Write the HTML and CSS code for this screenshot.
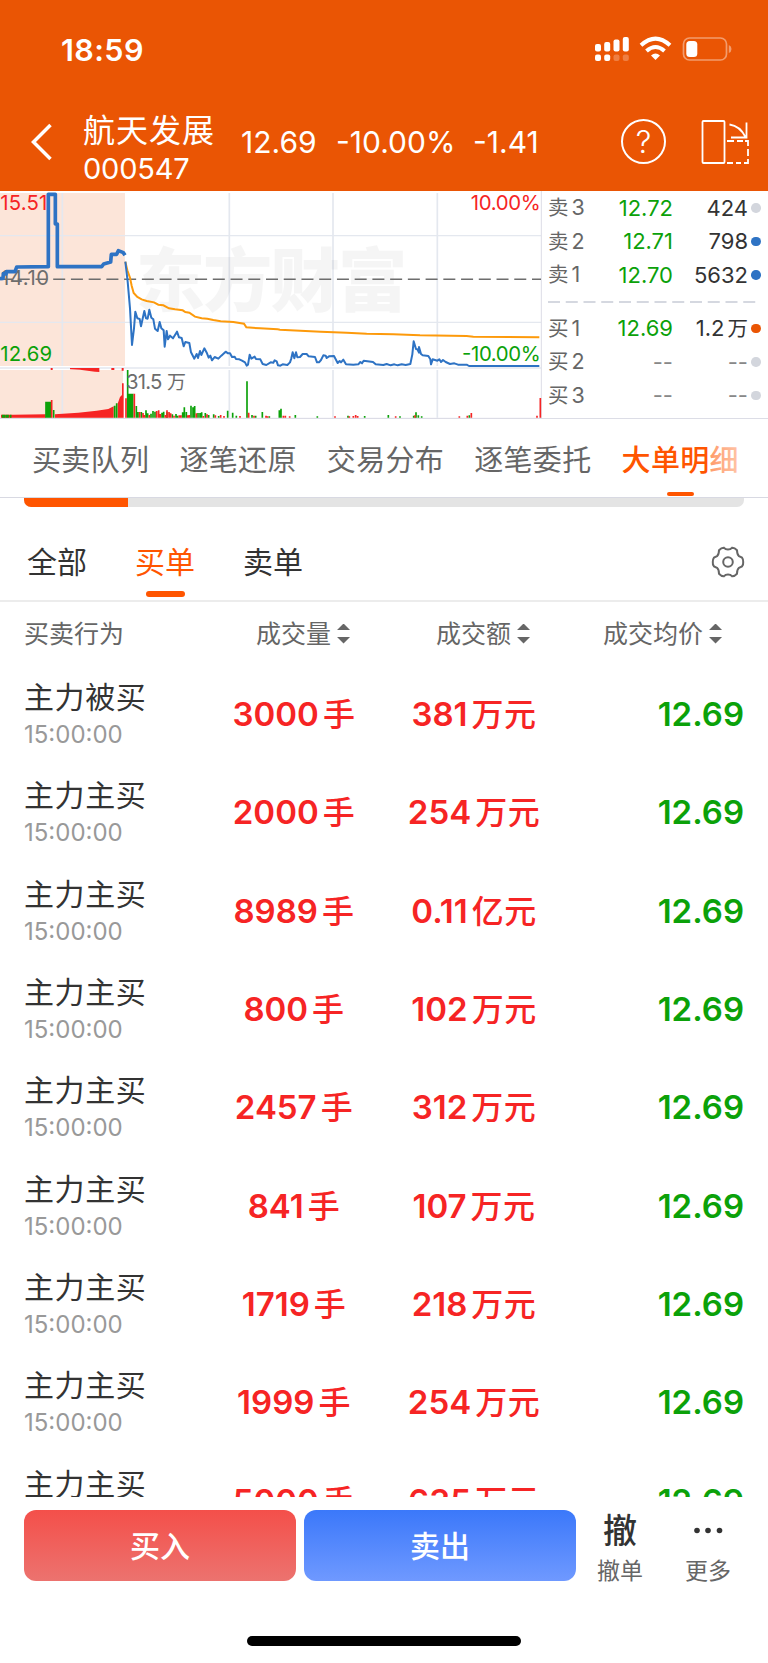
FILE: index.html
```html
<!DOCTYPE html>
<html lang="zh-CN">
<head>
    <meta charset="UTF-8">
    <meta name="viewport" content="width=device-width, initial-scale=1.0">
    <title>航天发展 000547</title>
    <link rel="stylesheet" href="styles.css">
</head>
<body>
<header class="top">
    <div class="status-bar">
        <span class="clock">18:59</span>
        <svg class="status-icons" width="138" height="26" viewBox="0 0 138 26">
            <g fill="#fff">
                <rect x="0" y="8" width="6" height="7.5" rx="2"/>
                <rect x="9.2" y="6" width="6" height="9.5" rx="2"/>
                <rect x="18.5" y="3.5" width="6" height="12" rx="2"/>
                <rect x="27.8" y="1" width="6" height="14.5" rx="2"/>
                <rect x="0" y="18.5" width="6" height="6.5" rx="2"/>
                <rect x="9.2" y="18.5" width="6" height="6.5" rx="2"/>
                <rect x="18.5" y="18.5" width="6" height="6.5" rx="2" opacity=".25"/>
                <rect x="27.8" y="18.5" width="6" height="6.5" rx="2" opacity=".25"/>
                <path d="M56 19.500Q60.500 15.500 65 19.500L60.500 24Z"/>
            </g>
            <g fill="none" stroke="#fff" stroke-width="4">
                <path d="M46 9.300Q60.500 -4 75 9.300"/>
                <path d="M51.500 15Q60.500 7 69.500 15"/>
            </g>
            <rect x="88.500" y="2" width="43" height="22" rx="6" fill="none" stroke="#fff" stroke-width="1.700" opacity=".42"/>
            <rect x="91.300" y="5" width="11" height="16" rx="3.500" fill="#fff"/>
            <path d="M133.800 9Q136.500 10 136.500 13T133.800 17Z" fill="#fff" opacity=".42"/>
        </svg>
    </div>
    <div class="nav">
        <svg class="back" width="22" height="38" viewBox="0 0 22 38">
            <path d="M19.500 2L2.500 19L19.500 36" fill="none" stroke="#fff" stroke-width="3.500"/>
        </svg>
        <div class="stock">
            <div class="stock-name">航天发展</div>
            <div class="stock-code">000547</div>
        </div>
        <div class="quote">
            <span class="q-price">12.69</span>
            <span class="q-rate">-10.00%</span>
            <span class="q-diff">-1.41</span>
        </div>
        <div class="help">?</div>
        <svg class="rotate" width="49" height="46" viewBox="0 0 49 46" fill="none" stroke="#fff" stroke-width="1.800">
            <rect x="1.500" y="2" width="22" height="42" rx="1"/>
            <path d="M28.500 5.500Q39 7 44.500 18M45.500 3.500V18.500H30"/>
            <path d="M26 22H33M36 22H42M44 22H47V27M47 30V37M47 40V44H43M40 44H35M32 44H26"/>
        </svg>
    </div>
</header>

<section class="market">
    <!-- chart units are thirds of a pixel -->
    <svg class="chart" width="542" height="228" viewBox="0 18 1626 684">
        <rect x="0" y="24" width="375" height="519" fill="#fce5d9"/>
        <rect x="0" y="555" width="369" height="144" fill="#fce5d9"/>
        <g stroke="#e4e8ef" stroke-width="5" fill="none">
            <path d="M187 24V543M187 555V698M688 24V543M688 555V698M999 24V543M999 555V698M1312 24V543M1312 555V698"/>
            <path d="M0 152H1623M0 412H1623M0 549H1623" stroke-width="4"/>
            <path d="M1624 18V700M0 700H1626" stroke="#dcdde6" stroke-width="3"/>
        </g>
        <text class="watermark" x="407" y="364" textLength="815">东方财富</text>
        <path d="M0 283H1623" stroke="#6d6d6d" stroke-width="4.500" stroke-dasharray="36 17.200" fill="none"/>
        <text class="axis up" x="1" y="74" textLength="141">15.51</text>
        <text class="axis up" x="1412" y="74" textLength="210">10.00%</text>
        <text class="axis mid" x="3" y="300" textLength="144">14.10</text>
        <text class="axis down" x="1" y="527" textLength="155">12.69</text>
        <text class="axis down" x="1386" y="527" textLength="236">-10.00%</text>

        <path d="M376 230L382 256L390 278L395 302L401 324L412 336L425 343L440 348L462 352L475 359L490 361L507 370L525 373L548 376L556 381L568 383L585 395L605 400L622 401L640 405L662 409L700 411L732 416L739 427L780 430L833 433L840 434L962 440L1040 443L1100 446L1180 448L1260 451L1400 453L1420 455L1618 457" fill="none" stroke="#fd9a0b" stroke-width="6"/>
        <g fill="none" stroke="#2e73c4" stroke-linejoin="round">
            <path d="M0 281L9 280L10 266L18 267L19 260L45 260L50 246L145 245V28H166V117H172V245H305L311 237L332 231L334 208L350 208L355 197L370 203L375 211" stroke-width="11"/>
            <path d="M376 230L383 290L390 370L396 480L402 430L406 380L412 400L419 402L423 424L433 378L438 400L443 401L448 374L454 398L460 403L465 431L473 438L479 411L484 430L491 436L494 485L500 438L504 463L510 452L519 460L531 440L537 457L545 459L551 484L556 471L568 474L573 502L583 521L590 507L594 519L600 498L604 510L613 490L621 505L626 518L631 512L636 526L644 516L655 521L664 512L677 500L684 505L690 505L696 516L704 515L708 522L718 523L726 527L735 532L740 542L744 539L749 509L754 521L764 515L768 522L781 523L788 537L799 540L812 532L820 533L824 526L830 529L834 541L841 542L848 538L862 540L870 532L874 520L878 502L883 520L888 502L892 517L900 516L908 507L920 507L926 514L945 516L951 532L957 532L963 525L970 511L977 512L980 519L987 514L1002 513L1013 534L1019 528L1023 532L1030 524L1038 538L1060 539L1075 538L1081 531L1086 535L1091 527L1119 531L1127 538L1150 540L1160 537L1172 541L1183 538L1193 541L1205 538L1217 540L1231 537L1237 508L1241 469L1248 492L1252 493L1257 503L1257 486L1263 507L1268 511L1285 513L1291 523L1293 538L1298 523L1312 527L1318 523L1323 531L1329 525L1337 531L1350 537L1363 535L1374 539L1400 539L1407 543H1618" stroke-width="6"/>
        </g>

        <g fill="#f62424">
            <path d="M3 698V689H40L137 688V698ZM165 698V688L235 683L290 677L325 672L341 664V698ZM353 698V656L360 636L366 630V595H371V698Z"/>
            <path d="M152 549H158V555H152ZM210 549H298V561L285 560L240 554L210 553ZM334 549H343V555H334ZM365 549H371V557H365Z"/>
        </g>
        <g fill="none" stroke-width="5">
            <path stroke="#0ba109" d="M8 698V689M13 698V689M19 698V689M24 698V689M32 698V689M138 698V650M143 698V650M148 698V650M151 698V650M161 698V675M344 698V662M350 698V655M383 698V555M388 698V626M393 698V626M398 698V626M409 698V663M414 698V681M424 698V681M438 698V676M443 698V685M453 698V686M459 698V678M465 698V680M486 698V683M491 698V680M501 698V682M517 698V688M528 698V687M533 698V692M548 698V682M553 698V667M559 698V681M573 698V662M579 698V667M584 698V663M594 698V684M600 698V684M605 698V682M616 698V684M626 698V690M641 698V688M656 698V693M683 698V677M698 698V683M709 698V692M741 698V589M756 698V690M767 698V692M787 698V681M808 698V694M838 698V676M843 698V671M886 698V690M952 698V694M1044 698V692M1094 698V693M1165 698V690M1200 698V694M1241 698V692M1248 698V682M1255 698V691M1265 698V694M1408 698V691"/>
            <path stroke="#f62424" d="M155 698V645M378 698V640M403 698V626M419 698V681M429 698V684M433 698V690M448 698V690M470 698V678M476 698V676M481 698V687M496 698V690M501 698V676M507 698V681M512 698V685M522 698V692M538 698V691M543 698V691M563 698V691M568 698V690M589 698V685M610 698V693M621 698V688M646 698V691M662 698V690M672 698V693M720 698V693M746 698V683M762 698V692M798 698V692M803 698V694M850 698V692M856 698V692M869 698V694M1005 698V694M1048 698V694M1060 698V693M1067 698V690M1073 698V693M1187 698V694M1245 698V691M1378 698V694M1402 698V692M1414 698V684M1611 698V692M1621 698V639"/>
        </g>
        <text class="axis mid" x="378" y="612" textLength="109">31.5</text>
        <text class="axis mid unit" x="501" y="611">万</text>
    </svg>

    <div class="book">
        <div class="level"><span>卖<s>3</s></span><b>12.72</b><em>424</em><i class="dot"></i></div>
        <div class="level"><span>卖<s>2</s></span><b>12.71</b><em>798</em><i class="dot blue"></i></div>
        <div class="level"><span>卖<s>1</s></span><b>12.70</b><em>5632</em><i class="dot blue"></i></div>
        <svg class="book-line" width="209" height="20" viewBox="0 0 209 20">
            <path d="M0 10H209" stroke="#d5d8e0" stroke-width="2" stroke-dasharray="12 5.750"/>
        </svg>
        <div class="level"><span>买<s>1</s></span><b>12.69</b><em>1.2<s>万</s></em><i class="dot orange"></i></div>
        <div class="level none"><span>买<s>2</s></span><b>--</b><em>--</em><i class="dot"></i></div>
        <div class="level none"><span>买<s>3</s></span><b>--</b><em>--</em><i class="dot"></i></div>
    </div>
</section>

<nav class="tabs">
    <span>买卖队列</span>
    <span>逐笔还原</span>
    <span>交易分布</span>
    <span>逐笔委托</span>
    <span class="active">大单明细</span>
</nav>
<div class="progress"><div class="progress-in"></div></div>

<div class="filters">
    <span>全部</span>
    <span class="active">买单</span>
    <span>卖单</span>
    <svg class="gear" width="34" height="32" viewBox="0 0 34 32" fill="none" stroke="#666" stroke-width="2">
        <path d="M13 1.800Q14.500 3.600 17 3.600T21 1.800Q23.500 1.600 26 4.300Q26 8.500 28 10.200L31 11.600Q32.500 13.500 32.200 16Q32.500 18.500 31 20.400L28 21.800Q26 23.500 26 27.700Q23.500 30.400 21 30.200Q19.500 28.400 17 28.400T13 30.200Q10.500 30.400 8 27.700Q8 23.500 6 21.800L3 20.400Q1.500 18.500 1.800 16Q1.500 13.500 3 11.600L6 10.200Q8 8.500 8 4.300Q10.500 1.600 13 1.800Z"/>
        <circle cx="17" cy="16" r="4.800"/>
    </svg>
</div>

<div class="list-head">
    <span class="c-name">买卖行为</span>
    <span class="c-vol">成交量<i class="sort"></i></span>
    <span class="c-amt">成交额<i class="sort"></i></span>
    <span class="c-price">成交均价<i class="sort"></i></span>
</div>

<main class="list">
    <div class="row">
        <div class="who">主力被买<small>15:00:00</small></div>
        <div class="vol">3000<u>手</u></div><div class="amt">381<u>万元</u></div><div class="price">12.69</div>
    </div>
    <div class="row">
        <div class="who">主力主买<small>15:00:00</small></div>
        <div class="vol">2000<u>手</u></div><div class="amt">254<u>万元</u></div><div class="price">12.69</div>
    </div>
    <div class="row">
        <div class="who">主力主买<small>15:00:00</small></div>
        <div class="vol">8989<u>手</u></div><div class="amt">0.11<u>亿元</u></div><div class="price">12.69</div>
    </div>
    <div class="row">
        <div class="who">主力主买<small>15:00:00</small></div>
        <div class="vol">800<u>手</u></div><div class="amt">102<u>万元</u></div><div class="price">12.69</div>
    </div>
    <div class="row">
        <div class="who">主力主买<small>15:00:00</small></div>
        <div class="vol">2457<u>手</u></div><div class="amt">312<u>万元</u></div><div class="price">12.69</div>
    </div>
    <div class="row">
        <div class="who">主力主买<small>15:00:00</small></div>
        <div class="vol">841<u>手</u></div><div class="amt">107<u>万元</u></div><div class="price">12.69</div>
    </div>
    <div class="row">
        <div class="who">主力主买<small>15:00:00</small></div>
        <div class="vol">1719<u>手</u></div><div class="amt">218<u>万元</u></div><div class="price">12.69</div>
    </div>
    <div class="row">
        <div class="who">主力主买<small>15:00:00</small></div>
        <div class="vol">1999<u>手</u></div><div class="amt">254<u>万元</u></div><div class="price">12.69</div>
    </div>
    <div class="row">
        <div class="who">主力主买</div>
        <div class="vol">5000<u>手</u></div><div class="amt">635<u>万元</u></div><div class="price">12.69</div>
    </div>
</main>

<footer class="bottom">
    <div class="actions">
        <button class="btn buy">买入</button>
        <button class="btn sell">卖出</button>
        <div class="tool"><span class="tool-icon">撤</span>撤单</div>
        <div class="tool more">
            <svg class="tool-icon" width="30" height="42" viewBox="0 0 30 42" fill="#333">
                <circle cx="4" cy="20.500" r="2.800"/><circle cx="15" cy="20.500" r="2.800"/><circle cx="26.500" cy="20.500" r="2.800"/>
            </svg>更多
        </div>
    </div>
    <div class="home-bar"></div>
</footer>
</body>
</html>
```
FILE: styles.css
```css
* {
    box-sizing: border-box;
}
body {
    margin: 0;
    width: 768px;
    height: 1663px;
    overflow: hidden;
    display: flex;
    flex-direction: column;
    background: #fff;
    color: #333;
    font-family: Inter, "Noto Sans CJK SC", sans-serif;
}
.top {
    height: 191px;
    background: #ea5504;
    color: #fff;
    flex: none;
}
.status-bar {
    height: 98px;
    padding: 0 36px 0 61px;
    display: flex;
    justify-content: space-between;
    align-items: center;
}
.clock {
    font-size: 30.500px;
    font-weight: 600;
    letter-spacing: .4px;
}
.status-icons {
    margin-right: -1px;
}
.nav {
    height: 93px;
    display: flex;
    align-items: center;
    padding-left: 31px;
}
.back {
    margin-top: -6px;
}
.stock {
    width: 158px;
    margin-left: 30px;
}
.stock-name {
    font-size: 32px;
    letter-spacing: 1px;
    line-height: 40px;
    margin-top: 9px;
}
.stock-code {
    font-size: 29px;
    line-height: 36px;
    letter-spacing: -.2px;
}
.quote {
    display: flex;
    font-size: 30px;
    width: 380px;
    line-height: 40px;
    margin-top: -5px;
}
.q-price {
    width: 95px;
}
.q-rate {
    width: 137px;
}
.help {
    width: 45px;
    height: 45px;
    border: 2px solid #fff;
    border-radius: 50%;
    font-size: 31px;
    font-weight: 300;
    line-height: 41px;
    text-align: center;
    margin-top: -6px;
}
.rotate {
    margin: -6px 0 0 35px;
}

/* chart + order book */
.market {
    height: 228px;
    display: flex;
    flex: none;
    border-bottom: 1px solid #dcdde6;
}
.chart {
    flex: none;
}
.axis {
    font-size: 61px;
}
.axis.unit {
    font-size: 57px;
}
.up {
    fill: #f62424;
}
.down {
    fill: #0ba109;
}
.mid {
    fill: #6d6d6d;
}
.watermark {
    font-size: 208px;
    font-weight: 900;
    fill: #000;
    opacity: .035;
}
.book {
    flex: 1;
    padding: 0 7px 0 6px;
}
.level {
    display: flex;
    align-items: center;
    height: 33.500px;
    font-size: 22px;
    line-height: 34px;
}
.level span {
    width: 51px;
    font-size: 20.500px;
    color: #666;
}
.level s {
    text-decoration: none;
    margin-left: 3px;
}
.level span s {
    font-size: 21.500px;
}
.level em s {
    font-size: 20.500px;
}
.level b {
    width: 74px;
    text-align: right;
    font-weight: 400;
    color: #0ba109;
}
.level em {
    width: 75px;
    text-align: right;
    font-style: normal;
}
.level.none b, .level.none em {
    color: #888;
}
.dot {
    width: 9.500px;
    height: 9.500px;
    border-radius: 50%;
    background: #d3d6dd;
    margin-left: 3px;
}
.dot.blue {
    background: #2e73c4;
}
.dot.orange {
    background: #ea5504;
}
.book-line {
    display: block;
}

/* tabs */
.tabs {
    position: relative;
    height: 79px;
    flex: none;
    display: flex;
    gap: 30px;
    padding-left: 32px;
    border-bottom: 1px solid #d8d9e2;
    font-size: 29px;
    line-height: 83px;
    letter-spacing: .35px;
    color: #666;
}
.tabs span {
    width: 117.400px;
    height: 78px;
    white-space: nowrap;
}
.tabs .active {
    position: relative;
    color: #ff5500;
    font-weight: 500;
}
.tabs .active::after {
    content: "";
    position: absolute;
    left: 45px;
    bottom: 1px;
    width: 27px;
    height: 4px;
    border-radius: 2px;
    background: #ff5500;
}
.tabs::after {
    content: "";
    position: absolute;
    right: 0;
    top: 1px;
    width: 60px;
    height: 72px;
    background: linear-gradient(to right, rgba(255,255,255,.4), rgba(255,255,255,.75) 70%, #fff);
}
.progress {
    flex: none;
    height: 9px;
    margin: 0 24px;
    border-radius: 0 0 7px 7px;
    overflow: hidden;
    background: #e4e4e4;
}
.progress-in {
    width: 103.500px;
    height: 9px;
    background: #ff5500;
}
.filters {
    flex: none;
    height: 95px;
    border-bottom: 2px solid #ececec;
    padding: 0 23px 0 27px;
    display: flex;
    gap: 48px;
    font-size: 30px;
    line-height: 111px;
}
.filters span {
    position: relative;
    width: 60px;
    height: 93px;
}
.filters .active {
    color: #ff5500;
}
.filters .active::after {
    content: "";
    position: absolute;
    left: 11px;
    bottom: 3px;
    width: 39px;
    height: 6px;
    border-radius: 3px;
    background: #ff5500;
}
.gear {
    margin: 39px 0 0 auto;
}

/* big order list */
.list-head {
    flex: none;
    height: 63px;
    display: flex;
    padding-left: 24px;
    font-size: 25px;
    line-height: 64px;
    color: #666;
}
.list-head span {
    display: flex;
    align-items: center;
}
.c-name {
    width: 232px;
}
.c-vol {
    width: 180px;
}
.c-amt {
    width: 167px;
}
.sort {
    width: 13px;
    height: 20px;
    margin-left: 6px;
    background: #666;
    clip-path: polygon(50% 0, 100% 33%, 0 33%, 0 67%, 100% 67%, 50% 100%, 0 67%, 0 33%);
}
.list {
    height: 832px;
    flex: none;
    overflow: hidden;
}
.row {
    height: 98.330px;
    display: flex;
    padding: 0 24px;
    line-height: 99px;
}
.who {
    width: 180px;
    padding-top: 12px;
    font-size: 30px;
    line-height: 40px;
    letter-spacing: .6px;
}
.who small {
    display: block;
    font-size: 24px;
    line-height: 35px;
    letter-spacing: 0;
    color: #999;
}
.vol, .amt {
    width: 180px;
    text-align: center;
    font-size: 33px;
    font-weight: 600;
    color: #f62424;
}
.row u {
    text-decoration: none;
    font-size: 32px;
    font-weight: 500;
    margin-left: 4px;
    letter-spacing: .5px;
}
.price {
    flex: 1;
    text-align: right;
    font-size: 33px;
    font-weight: 600;
    color: #0ba109;
}

/* bottom bar */
.bottom {
    flex: 1;
    background: #fff;
}
.actions {
    height: 139px;
    padding: 13px 0 0 24px;
    display: flex;
    gap: 8px;
}
.btn {
    width: 272px;
    height: 71px;
    padding-bottom: 5px;
    border: none;
    border-radius: 12px;
    color: #fff;
    font-family: inherit;
    font-size: 30px;
    font-weight: 500;
}
.buy {
    background: linear-gradient(#f44f4a, #ec736f);
}
.sell {
    background: linear-gradient(#3b78fa, #6f99ff);
}
.tool {
    width: 72px;
    display: flex;
    flex-direction: column;
    align-items: center;
    font-size: 23px;
    line-height: 38px;
    color: #666;
}
.tool.more {
    margin-left: 8px;
}
.tool-icon {
    font-size: 34px;
    font-weight: 500;
    line-height: 42px;
    color: #333;
}
.home-bar {
    width: 274px;
    height: 10px;
    border-radius: 5px;
    background: #000;
    margin: 0 auto;
}
```
